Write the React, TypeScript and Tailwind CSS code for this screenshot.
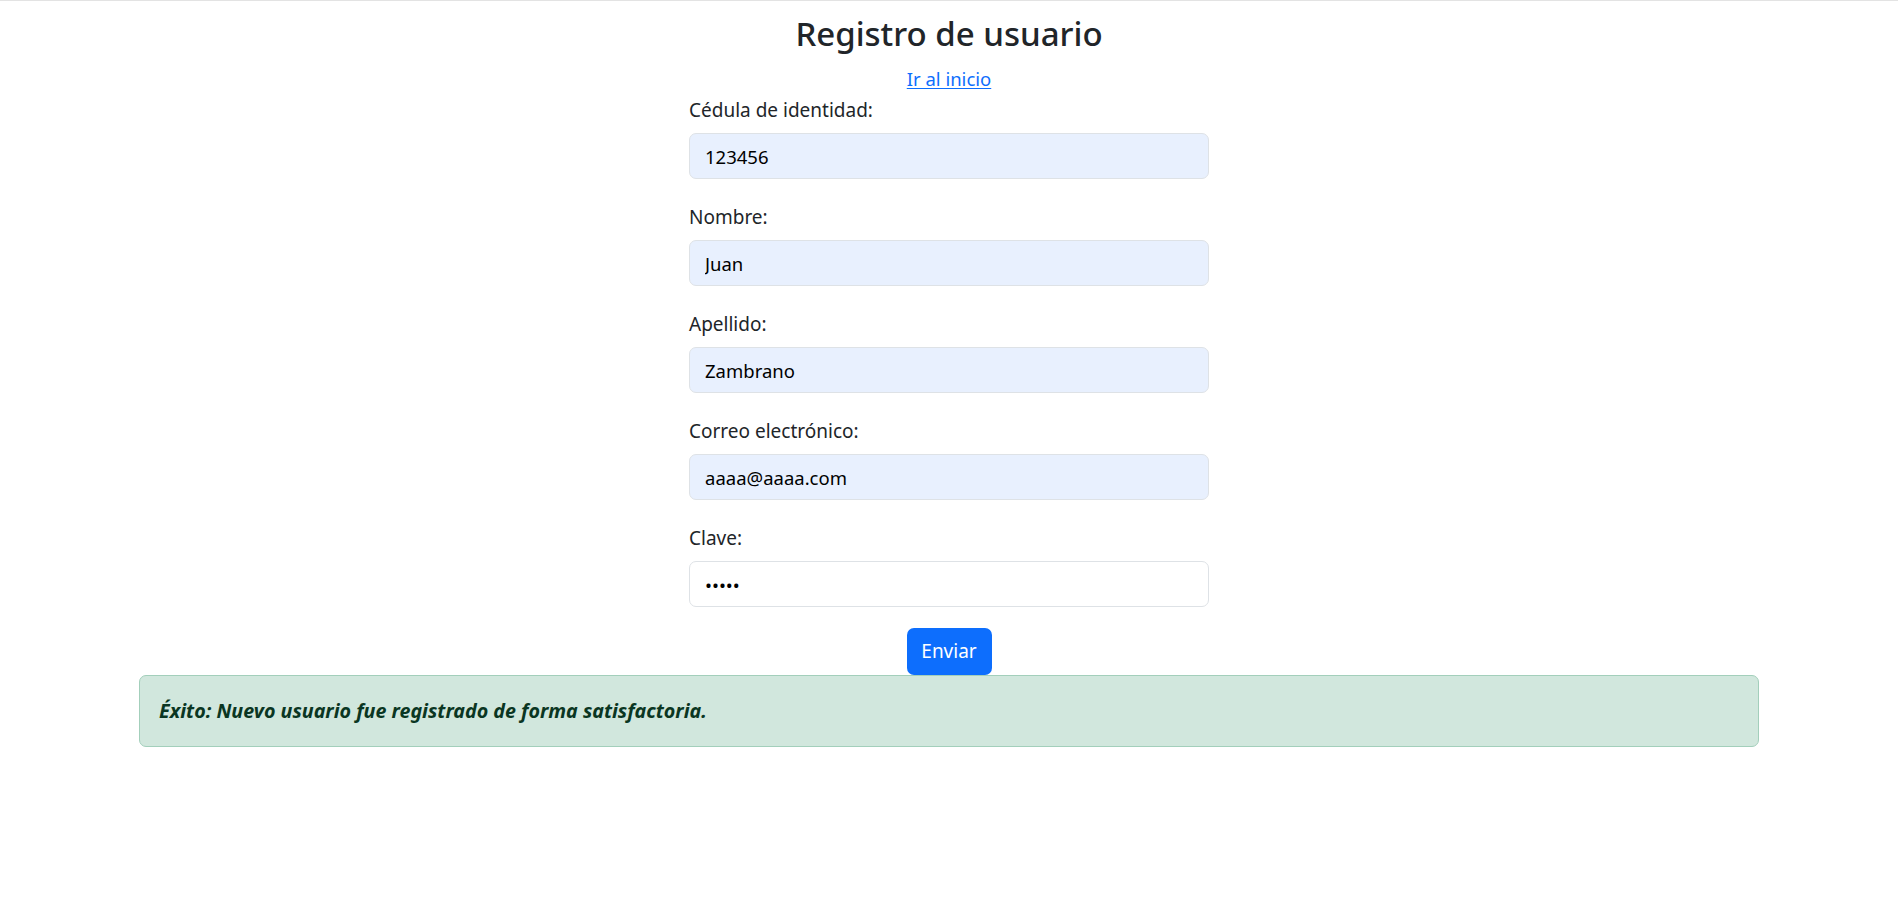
import React from "react";

const fields = [
  { label: "Cédula de identidad:", value: "123456", type: "text", filled: true },
  { label: "Nombre:", value: "Juan", type: "text", filled: true },
  { label: "Apellido:", value: "Zambrano", type: "text", filled: true },
  { label: "Correo electrónico:", value: "aaaa@aaaa.com", type: "email", filled: true },
  { label: "Clave:", value: "12345", type: "password", filled: false },
];

export default function App() {
  return (
    <div
      className="min-h-[900px] w-full bg-white border-t border-[#e3e3e3] text-[#212529]"
      style={{ fontFamily: '"Noto Sans", "Open Sans", sans-serif' }}
    >
      <div className="flex flex-col items-center">
        <h1 className="mt-[10px] text-[33px] leading-[46px] font-medium text-[#212529]">
          Registro de usuario
        </h1>
        <a
          href="#"
          className="mt-[7px] text-[18.5px] leading-[29px] text-[#0d6efd] underline underline-offset-2"
        >
          Ir al inicio
        </a>
        <form className="mt-[3px] w-[520px] flex flex-col" onSubmit={(e) => e.preventDefault()}>
          {fields.map((f, i) => (
            <div
              key={f.label}
              className={"flex flex-col " + (i === fields.length - 1 ? "mb-[21px]" : "mb-[24px]")}
            >
              <label className="text-[19px] leading-[29px] mb-[8px] text-[#212529]">
                {f.label}
              </label>
              <input
                type={f.type}
                defaultValue={f.value}
                readOnly
                className={
                  "h-[46px] w-full rounded-[7px] border border-[#dee2e6] px-[15px] text-[18.5px] text-[#000000] outline-none " +
                  (f.filled ? "bg-[#e8f0fe]" : "bg-white")
                }
              />
            </div>
          ))}
          <div className="flex justify-center">
            <button
              type="submit"
              className="h-[47px] w-[85px] rounded-[7px] bg-[#0d6efd] text-white text-[19px] leading-[29px]"
            >
              Enviar
            </button>
          </div>
        </form>
        <div className="w-[1620px] h-[72px] rounded-[7px] border border-[#a3cfbb] bg-[#d1e7dd] px-[19px] flex items-center">
          <span className="text-[19.7px] font-bold italic text-[#0a3622]">
            Éxito: Nuevo usuario fue registrado de forma satisfactoria.
          </span>
        </div>
      </div>
    </div>
  );
}
